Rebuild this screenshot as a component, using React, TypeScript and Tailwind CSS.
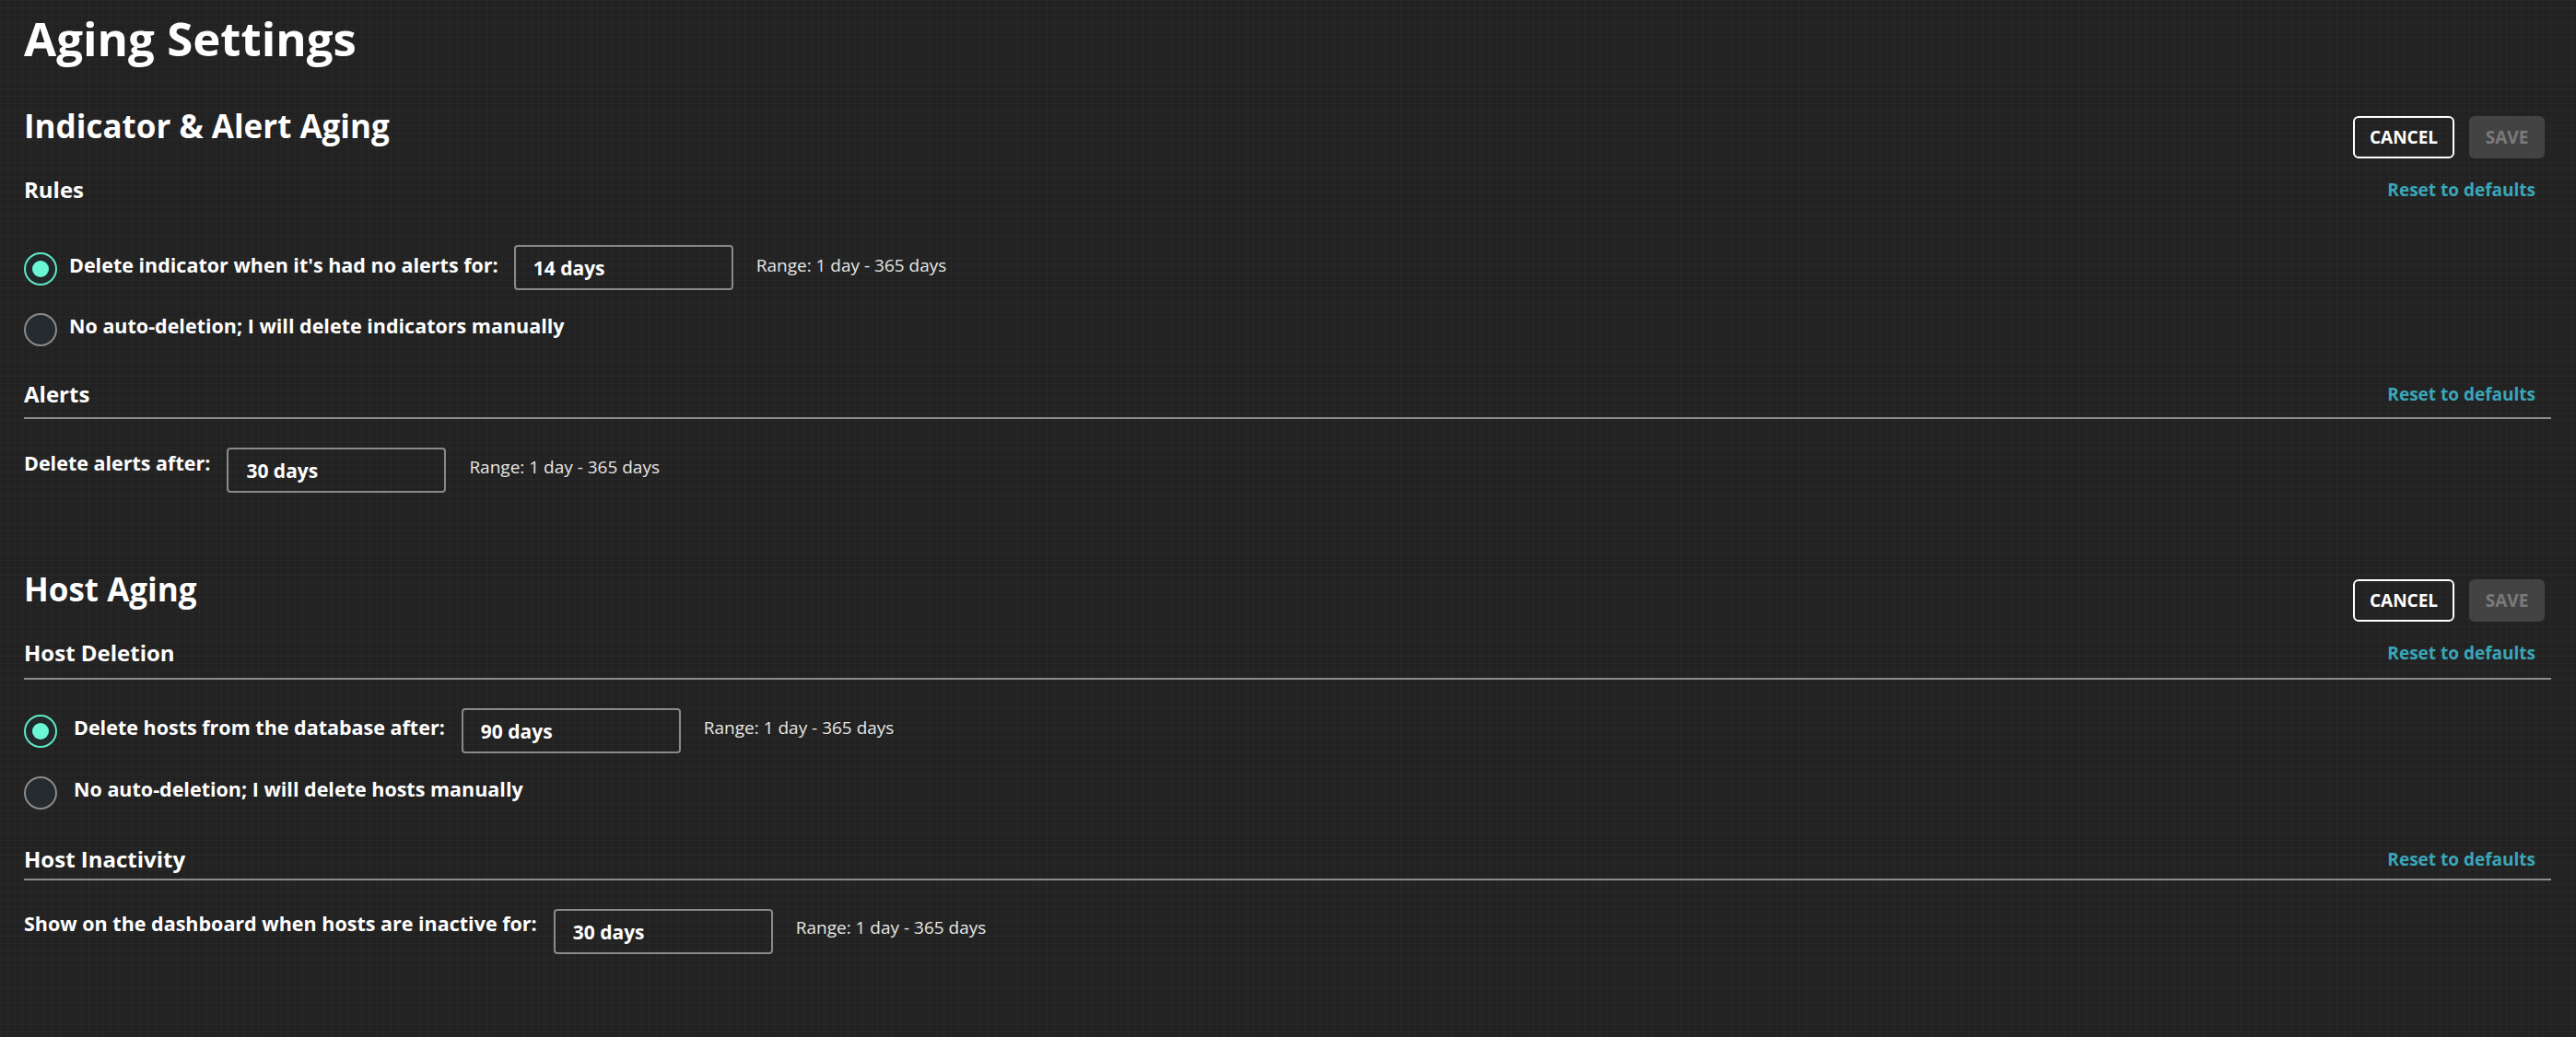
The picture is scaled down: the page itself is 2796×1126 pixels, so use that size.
import React from 'react';

const Radio = ({ checked }: { checked?: boolean }) =>
  checked ? (
    <span className="flex h-[36px] w-[36px] shrink-0 items-center justify-center rounded-full border-2 border-[#5de9c6] bg-[#23282b]">
      <span className="h-[18px] w-[18px] rounded-full bg-[#6af7d5]" />
    </span>
  ) : (
    <span className="h-[36px] w-[36px] shrink-0 rounded-full border-2 border-[#8a8a8a] bg-[#262b2f]" />
  );

const DaysInput = ({ value }: { value: string }) => (
  <input
    readOnly
    value={value}
    className="h-[49px] w-[238px] shrink-0 rounded-[4px] border-2 border-[#8a8a8a] bg-transparent px-[19px] text-[21px] font-bold text-white outline-none"
  />
);

const Range = ({ className = '' }: { className?: string }) => (
  <span className={`ml-[25px] text-[19px] leading-[28px] text-[#e6e6e6] ${className}`}>Range: 1 day - 365 days</span>
);

const ResetLink = () => (
  <a className="mr-[17px] cursor-pointer text-[19px] leading-[26px] font-bold text-[#3aa6b9]">Reset to defaults</a>
);

const Actions = () => (
  <div className="mr-[7px] mt-[12px] flex gap-4">
    <button className="h-[46px] w-[110px] rounded-[6px] border-2 border-white text-[19px] font-bold text-white">CANCEL</button>
    <button disabled className="h-[46px] w-[82px] rounded-[6px] bg-[#434343] text-[19px] font-bold text-[#7a7a7a]">SAVE</button>
  </div>
);

export default function App() {
  return (
    <div className="min-h-screen w-full bg-[#222222] bg-[linear-gradient(to_right,rgba(255,255,255,0.025)_1px,transparent_1px),linear-gradient(to_bottom,rgba(255,255,255,0.025)_1px,transparent_1px)] bg-[size:8px_8px] pl-[26px] pr-[27px] pt-[10px] pb-[40px] font-['Open_Sans',sans-serif] text-white">
      <h1 className="text-[51px] leading-[62px] font-bold">Aging Settings</h1>

      {/* Indicator & Alert Aging */}
      <section className="mt-[42px]">
        <div className="flex items-start justify-between">
          <h2 className="text-[35px] leading-[46px] font-bold">Indicator &amp; Alert Aging</h2>
          <Actions />
        </div>

        <div className="mt-[18px] flex items-center justify-between">
          <h3 className="text-[24px] leading-[32px] font-bold">Rules</h3>
          <ResetLink />
        </div>

        <div className="mt-[44px] flex items-start">
          <span className="mt-[8px] flex"><Radio checked /></span>
          <span className="ml-[13px] mt-[8px] text-[21.5px] leading-[28px] font-bold">Delete indicator when it's had no alerts for:</span>
          <span className="ml-[17px] flex"><DaysInput value="14 days" /></span>
          <Range className="mt-[8px]" />
        </div>
        <div className="mt-[25px] flex items-start">
          <Radio />
          <span className="ml-[13px] text-[21.5px] leading-[28px] font-bold">No auto-deletion; I will delete indicators manually</span>
        </div>

        <div className="mt-[36px] flex items-center justify-between border-b-2 border-[#8d8d8d] pb-[9px]">
          <h3 className="text-[24px] leading-[32px] font-bold">Alerts</h3>
          <ResetLink />
        </div>
        <div className="mt-[31px] flex items-start">
          <span className="mt-[3px] text-[21.5px] leading-[28px] font-bold">Delete alerts after:</span>
          <span className="ml-[18px] flex"><DaysInput value="30 days" /></span>
          <Range className="mt-[7px]" />
        </div>
      </section>

      {/* Host Aging */}
      <section className="mt-[82px]">
        <div className="flex items-start justify-between">
          <h2 className="text-[35px] leading-[46px] font-bold">Host Aging</h2>
          <Actions />
        </div>

        <div className="mt-[18px] flex items-center justify-between border-b-2 border-[#8d8d8d] pb-[11px]">
          <h3 className="text-[24px] leading-[32px] font-bold">Host Deletion</h3>
          <ResetLink />
        </div>

        <div className="mt-[31px] flex items-start">
          <span className="mt-[7px] flex"><Radio checked /></span>
          <span className="ml-[18px] mt-[7px] text-[21.5px] leading-[28px] font-bold">Delete hosts from the database after:</span>
          <span className="ml-[18px] flex"><DaysInput value="90 days" /></span>
          <Range className="mt-[7px]" />
        </div>
        <div className="mt-[25px] flex items-start">
          <Radio />
          <span className="ml-[18px] text-[21.5px] leading-[28px] font-bold">No auto-deletion; I will delete hosts manually</span>
        </div>

        <div className="mt-[38px] flex items-center justify-between border-b-2 border-[#8d8d8d] pb-[5px]">
          <h3 className="text-[24px] leading-[32px] font-bold">Host Inactivity</h3>
          <ResetLink />
        </div>
        <div className="mt-[31px] flex items-start">
          <span className="mt-[2px] text-[21.5px] leading-[28px] font-bold">Show on the dashboard when hosts are inactive for:</span>
          <span className="ml-[18px] flex"><DaysInput value="30 days" /></span>
          <Range className="mt-[6px]" />
        </div>
      </section>
    </div>
  );
}
